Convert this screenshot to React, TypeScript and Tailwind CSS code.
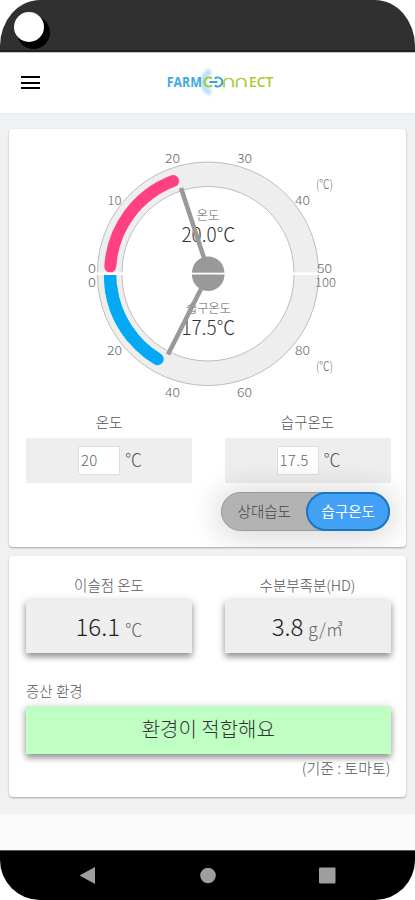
import React from "react";

const KR = "font-['Noto_Sans_CJK_KR',sans-serif]";

type Tick = { x: number; y: number; label: string; w: number };

const ticks: Tick[] = [
  { x: 92, y: 273, label: "0", w: 8 },
  { x: 114.5, y: 204.5, label: "10", w: 14 },
  { x: 172.5, y: 162.5, label: "20", w: 15 },
  { x: 244.5, y: 162.5, label: "30", w: 15 },
  { x: 302.5, y: 204.5, label: "40", w: 15 },
  { x: 324.5, y: 273, label: "50", w: 15 },
  { x: 92, y: 286.5, label: "0", w: 8 },
  { x: 114.5, y: 354.5, label: "20", w: 15 },
  { x: 172.5, y: 397, label: "40", w: 15 },
  { x: 244.5, y: 397, label: "60", w: 15 },
  { x: 302.5, y: 354.5, label: "80", w: 15 },
  { x: 325.5, y: 286.5, label: "100", w: 21 },
  { x: 324.5, y: 188.5, label: "(℃)", w: 17 },
  { x: 324.5, y: 370.5, label: "(℃)", w: 17 },
];

function Logo() {
  return (
    <svg width="112" height="30" viewBox="164 67 112 30" className="absolute left-[164px] top-[14px]">
      <defs>
        <filter id="glow" x="-50%" y="-50%" width="200%" height="200%">
          <feGaussianBlur stdDeviation="1.8" />
        </filter>
      </defs>
      <path d="M211 71.5C201 74 201 90 211 93" fill="none" stroke="#9fd4f3" strokeWidth="6" opacity="0.75" filter="url(#glow)" />
      <text x="166.8" y="87" fontSize="13.5" textLength="35" lengthAdjust="spacingAndGlyphs" fill="#3fa9e3" className="font-['Open_Sans',sans-serif] font-bold">FARM</text>
      <path d="M212 78.6A4.5 4.5 0 1 0 212 85.4" fill="none" stroke="#9aca3c" strokeWidth="2.1" />
      <path d="M214.8 78.6A4.5 4.5 0 1 1 214.8 85.4M209.5 82H217.5" fill="none" stroke="#35a5df" strokeWidth="2.1" />
      <g fill="#a4cb2f" stroke="#a4cb2f" strokeWidth="0.4" fontSize="18" textAnchor="middle" className="font-['DejaVu_Sans',sans-serif]">
        <text transform="translate(229 87) scale(1.3 1)">∩</text>
        <text transform="translate(241.7 87) scale(1.3 1)">∩</text>
      </g>
      <text x="249" y="87" fontSize="13.5" textLength="24.3" lengthAdjust="spacingAndGlyphs" fill="#a4cb2f" className="font-['Open_Sans',sans-serif] font-semibold">ECT</text>
    </svg>
  );
}

function Gauge() {
  return (
    <svg width="398" height="284" viewBox="9 129 398 284" className="block shrink-0">
      <g fill="#eeeeee">
        <path d="M97.5 272.5A110.5 110.5 0 0 1 318.5 272.5H294A86 86 0 0 0 122 272.5Z" />
        <path d="M97.5 275A110.5 110.5 0 0 0 318.5 275H294A86 86 0 0 1 122 275Z" />
      </g>
      <g fill="none" stroke="#bdbdbd" strokeWidth="1">
        <path d="M97.5 272.5A110.5 110.5 0 0 1 318.5 272.5M294 272.5A86 86 0 0 0 122 272.5" />
        <path d="M97.5 275A110.5 110.5 0 0 0 318.5 275M294 275A86 86 0 0 1 122 275" />
      </g>
      <path d="M110.3 266.5A98 98 0 0 1 173 181" fill="none" stroke="#ff4081" strokeWidth="12" strokeLinecap="round" />
      <path d="M110.1 275A98 98 0 0 0 133 338" fill="none" stroke="#03a9f4" strokeWidth="12.5" />
      <path d="M111 287A98 98 0 0 0 157.5 359" fill="none" stroke="#03a9f4" strokeWidth="12.5" strokeLinecap="round" />
      <g fill="#5c5c5c" textAnchor="middle" className="font-['Noto_Sans_CJK_KR',sans-serif] font-light">
        <text x="208" y="220" fontSize="12.5" textLength="23" lengthAdjust="spacingAndGlyphs">온도</text>
        <text x="208.5" y="242" fontSize="19.5" textLength="54" lengthAdjust="spacingAndGlyphs" fill="#333333">20.0℃</text>
        <text x="208.5" y="312.5" fontSize="12.5" textLength="45">습구온도</text>
        <text x="208.5" y="334.5" fontSize="19.5" textLength="54" lengthAdjust="spacingAndGlyphs" fill="#333333">17.5℃</text>
      </g>
      <g stroke="#999999" strokeWidth="4.5" fill="#999999">
        <path d="M206 264L181 188" />
        <path d="M204 283L168 354.5" />
      </g>
      <circle cx="208.2" cy="272.7" r="16.2" fill="#999999" />
      <circle cx="208.2" cy="274.7" r="16.2" fill="#999999" />
      <rect x="97" y="272.7" width="223" height="1.8" fill="#ffffff" />
      <g fill="#666666" fontSize="12.5" textAnchor="middle" className="font-['Noto_Sans_CJK_KR',sans-serif] font-light">
        {ticks.map((t, i) => (
          <text key={i} x={t.x} y={t.y} textLength={t.w} lengthAdjust="spacingAndGlyphs">{t.label}</text>
        ))}
      </g>
    </svg>
  );
}

function Field({ label, value }: { label: string; value: string }) {
  return (
    <div className="w-[166px]">
      <div className="h-[25px] text-center text-[14.5px] leading-[17px] text-[#555]">{label}</div>
      <div className="flex h-[45px] items-center bg-[#eeeeee] pl-[52px]">
        <div className="h-[29px] w-[42px] border border-[#dedede] bg-white pl-[2px] text-[15px] leading-[25px] tracking-[0.3px] text-[#666]">{value}</div>
        <span className="ml-[5px] -mt-1 text-[17px] leading-[20px] text-[#555]">℃</span>
      </div>
    </div>
  );
}

function Result({ label, value, unit }: { label: string; value: string; unit: string }) {
  return (
    <div className="w-[166px]">
      <div className="h-[24px] text-center text-[14.5px] leading-[17px] text-[#555]">{label}</div>
      <div className="flex h-[53px] items-baseline justify-center gap-[5px] bg-[#eeeeee] text-[#666] shadow-[0_4px_6px_rgba(0,0,0,0.36),0_1px_10px_rgba(0,0,0,0.14)]">
        <span className="text-[24px] leading-[51px] text-[#222]">{value}</span>
        <span className="text-[17.5px] leading-[51px]">{unit}</span>
      </div>
    </div>
  );
}

export default function App() {
  return (
    <div className={`relative flex h-[900px] w-[415px] flex-col overflow-hidden bg-white font-light ${KR}`}>
      <div className="flex h-[52px] shrink-0 flex-col bg-white">
        <div className="h-[50px] rounded-t-[40px_46px] bg-[#303030] pt-[16px]">
          <div className="relative ml-[17px] h-[33px] w-[33px] rounded-full bg-black">
            <div className="absolute -left-[3px] -top-[4px] h-[30px] w-[30px] rounded-full bg-white" />
          </div>
        </div>
        <div className="h-[2px] bg-[#202020]" />
      </div>

      <header className="relative h-[61px] shrink-0 border-t border-[#c4c4c4] bg-white shadow-[0_0_2px_rgba(0,0,0,0.08)]">
        <div className="ml-[21px] mt-[23px] flex w-[19px] flex-col gap-[3.5px]">
          <span className="h-[2px] bg-black" />
          <span className="h-[2px] bg-black" />
          <span className="h-[2px] bg-black" />
        </div>
        <Logo />
      </header>

      <main className="flex h-[701px] shrink-0 flex-col bg-[#eff1f3] px-[9px] pt-[16px]">
        <section className="h-[418px] shrink-0 rounded-[4px] bg-white shadow-[0_1px_2px_rgba(0,0,0,0.32)]">
          <div className="flex h-full flex-col overflow-hidden rounded-[4px]">
            <Gauge />
            <div className="flex shrink-0 justify-between pl-[17px] pr-[15.5px]">
              <Field label="온도" value="20" />
              <Field label="습구온도" value="17.5" />
            </div>
            <div className="ml-[212px] mt-[9px] flex h-[39px] w-[169px] shrink-0 rounded-full border border-[#999] bg-[#b3b3b3] text-[14.5px] shadow-[0_2px_30px_6px_rgba(0,0,0,0.14)]">
              <div className="w-[85px] text-center leading-[36px] text-[#444]">상대습도</div>
              <div className="-my-px -mr-px w-[84px] rounded-full border-2 border-[#1777c4] bg-[#42a1f5] text-center font-normal leading-[34px] text-white">습구온도</div>
            </div>
          </div>
        </section>

        <section className="mt-[9px] h-[241px] shrink-0 rounded-[4px] bg-white pl-[17px] pr-[15.5px] pt-[20px] shadow-[0_1px_2px_rgba(0,0,0,0.32)]">
          <div className="flex justify-between">
            <Result label="이슬점 온도" value="16.1" unit="℃" />
            <Result label="수분부족분(HD)" value="3.8" unit="g/㎥" />
          </div>
          <div className="mt-[28px] h-[25px] text-[14.5px] leading-[19px] text-[#555]">증산 환경</div>
          <div className="h-[48px] bg-[#c0ffc4] text-center text-[20px] leading-[45px] text-[#333] shadow-[0_4px_6px_rgba(0,0,0,0.36),0_1px_10px_rgba(0,0,0,0.14)]">환경이 적합해요</div>
          <div className="mt-[4px] text-right text-[15px] leading-[20px] text-[#555]">(기준 : 토마토)</div>
        </section>
      </main>

      <div className="h-[36px] shrink-0 bg-[#fafafa]" />
      <nav className="h-[50px] shrink-0 rounded-b-[40px] border-t border-[#555] bg-black">
        <svg width="415" height="49" viewBox="0 851 415 49" fill="#9e9e9e">
          <path d="M79.5 875.5L95 867V884Z" />
          <circle cx="208" cy="875.5" r="7.8" />
          <rect x="319" y="867.5" width="16.5" height="16" rx="1" />
        </svg>
      </nav>
    </div>
  );
}
